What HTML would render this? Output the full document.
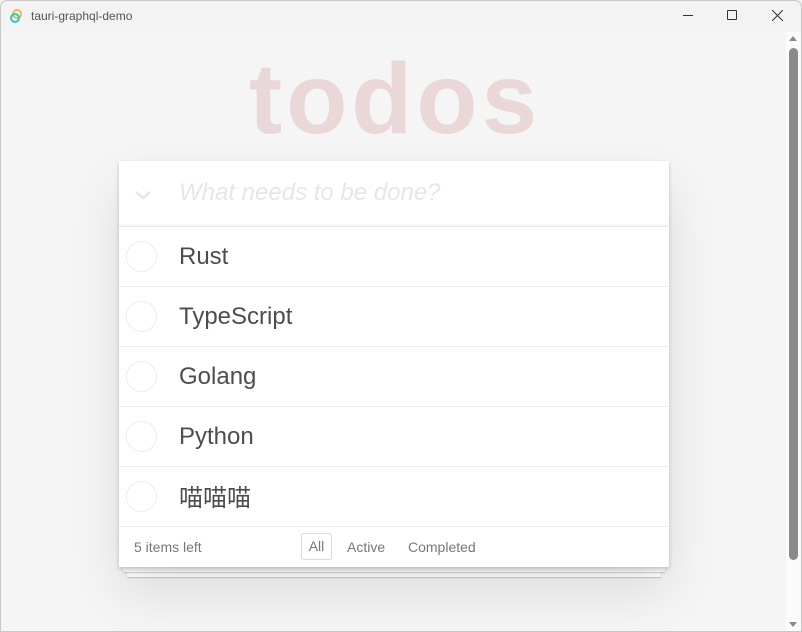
<!DOCTYPE html>
<html><head><meta charset="utf-8"><style>
*{margin:0;padding:0;box-sizing:border-box}
body{width:802px;height:632px;overflow:hidden;background:#f3f3f3;font-family:"Liberation Sans","Noto Sans CJK SC",sans-serif;position:relative}
.frame{position:absolute;left:0;top:0;width:802px;height:632px;border:1px solid #c8c8c8;border-radius:7px 7px 0 0;pointer-events:none;z-index:10}
.tb{position:absolute;left:0;top:0;width:802px;height:32px;background:#f3f3f3}
.tb .t{position:absolute;left:31px;top:9px;font-size:12px;color:#555}
.content{position:absolute;left:0;top:32px;width:786px;height:600px;background:#f5f5f5}
.sb{position:absolute;left:786px;top:32px;width:15px;height:600px;background:#fbfbfb}
.thumb{position:absolute;left:3px;top:16px;width:9px;height:512px;background:#8a8a8a;border-radius:5px}
h1{position:absolute;left:0;width:786px;text-align:center;top:10px;font-size:100px;letter-spacing:4px;text-indent:4px;font-weight:bold;color:rgba(175,47,47,0.15)}
.card{position:absolute;left:119px;top:161px;width:550px;background:#fff;box-shadow:0 2px 4px rgba(0,0,0,.2),0 25px 50px rgba(0,0,0,.1)}
.hd{height:66px;border-bottom:1px solid #e6e6e6;position:relative;box-shadow:inset 0 -2px 1px rgba(0,0,0,.03)}
.hd .ph{position:absolute;left:60px;top:18px;font-size:24px;font-style:italic;color:#e6e6e6}
.it{height:60px;border-bottom:1px solid #ededed;position:relative}
.it .c{position:absolute;left:7px;top:14px;width:31px;height:31px;border:1px solid #ededed;border-radius:50%}
.it .l{position:absolute;left:60px;top:16px;font-size:24px;color:#4d4d4d}
.ft{height:40px;position:relative;font-size:14px;color:#777}
.stack{position:absolute;height:6px;background:#fff;box-shadow:0 1px 1px rgba(0,0,0,.2)}
</style></head><body>
<div class="tb">
<svg style="position:absolute;left:9px;top:8px" width="14" height="16" viewBox="0 0 14 16"><circle cx="8" cy="6" r="4" fill="none" stroke="#f6b73c" stroke-width="2"/><circle cx="6" cy="10" r="4" fill="none" stroke="#24c8db" stroke-width="2"/></svg>
<div class="t">tauri-graphql-demo</div>
<div style="position:absolute;left:683px;top:15px;width:10px;height:1px;background:#333"></div>
<div style="position:absolute;left:727px;top:10px;width:10px;height:10px;border:1px solid #333;border-radius:1px"></div>
<svg style="position:absolute;left:772px;top:10px" width="11" height="11"><path d="M0 0L11 11M11 0L0 11" stroke="#333" stroke-width="1"/></svg>
</div>
<div class="content">
<h1>todos</h1>
</div>
<div class="sb"><div style="position:absolute;left:3px;top:4px;border:4.5px solid transparent;border-bottom:5px solid #888;border-top:0"></div><div class="thumb"></div><div style="position:absolute;left:3px;top:590px;border:4.5px solid transparent;border-top:5px solid #888;border-bottom:0"></div></div>
<div class="stack" style="left:127px;top:567px;width:534px;height:10px"></div>
<div class="stack" style="left:123px;top:567px;width:542px;height:5px"></div>
<div class="card">
<div class="hd"><svg style="position:absolute;left:16px;top:30px" width="16" height="10"><path d="M1 1L8 7L15 1" fill="none" stroke="#e6e6e6" stroke-width="2.5"/></svg><div class="ph">What needs to be done?</div></div>
<div class="it"><div class="c"></div><div class="l">Rust</div></div>
<div class="it"><div class="c"></div><div class="l">TypeScript</div></div>
<div class="it"><div class="c"></div><div class="l">Golang</div></div>
<div class="it"><div class="c"></div><div class="l">Python</div></div>
<div class="it"><div class="c"></div><div class="l" style="top:11px">喵喵喵</div></div>
<div class="ft">
<span style="position:absolute;left:15px;top:12px">5 items left</span>
<span style="position:absolute;left:182px;top:6px;height:27px;width:31px;border:1px solid #ebd3d3;border-radius:3px;text-align:center;line-height:25px">All</span>
<span style="position:absolute;left:228px;top:12px">Active</span>
<span style="position:absolute;left:289px;top:12px">Completed</span>
</div>
</div>
<div class="frame"></div>
</body></html>
